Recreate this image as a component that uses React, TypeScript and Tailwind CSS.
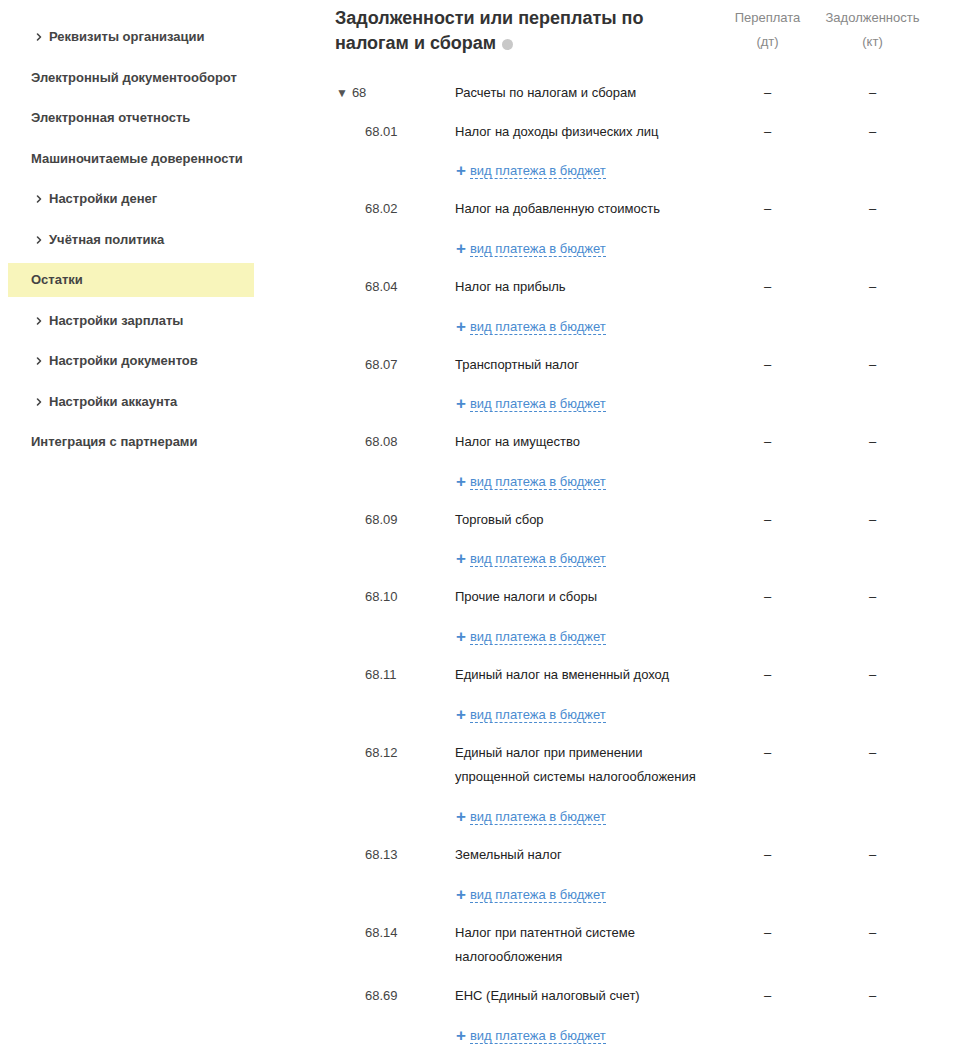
import { ChevronRight } from 'lucide-react';

type NavItem = { title: string; expandable?: boolean; active?: boolean };

const navItems: NavItem[] = [
    { title: 'Реквизиты организации', expandable: true },
    { title: 'Электронный документооборот' },
    { title: 'Электронная отчетность' },
    { title: 'Машиночитаемые доверенности' },
    { title: 'Настройки денег', expandable: true },
    { title: 'Учётная политика', expandable: true },
    { title: 'Остатки', active: true },
    { title: 'Настройки зарплаты', expandable: true },
    { title: 'Настройки документов', expandable: true },
    { title: 'Настройки аккаунта', expandable: true },
    { title: 'Интеграция с партнерами' },
];

type Account = { code: string; name: string; link?: boolean };

const accounts: Account[] = [
    { code: '68.01', name: 'Налог на доходы физических лиц', link: true },
    { code: '68.02', name: 'Налог на добавленную стоимость', link: true },
    { code: '68.04', name: 'Налог на прибыль', link: true },
    { code: '68.07', name: 'Транспортный налог', link: true },
    { code: '68.08', name: 'Налог на имущество', link: true },
    { code: '68.09', name: 'Торговый сбор', link: true },
    { code: '68.10', name: 'Прочие налоги и сборы', link: true },
    { code: '68.11', name: 'Единый налог на вмененный доход', link: true },
    { code: '68.12', name: 'Единый налог при применении упрощенной системы налогообложения', link: true },
    { code: '68.13', name: 'Земельный налог', link: true },
    { code: '68.14', name: 'Налог при патентной системе налогообложения' },
    { code: '68.69', name: 'ЕНС (Единый налоговый счет)', link: true },
];

const rowClass = 'grid grid-cols-[120px_260px_105px_105px] py-[7px] leading-[24.8px]';

function Sidebar() {
    return (
        <nav className="w-[246px] ml-2 pt-5 flex flex-col gap-[6.5px] shrink-0">
            {navItems.map((item) => (
                <div
                    key={item.title}
                    className={`h-[34px] flex items-center font-bold text-[13px] text-[#444] ${item.active ? 'bg-[#f8f5bb]' : ''} ${item.expandable ? 'pl-[25px]' : 'pl-[23px]'}`}
                >
                    {item.expandable && <ChevronRight className="w-[12px] h-[12px] mr-[4px] text-[#444]" strokeWidth={3.2} />}
                    {item.title}
                </div>
            ))}
        </nav>
    );
}

function Dash() {
    return <div className="text-center text-[#222]">–</div>;
}

function App() {
    return (
        <div className="flex bg-white min-h-[1061px] font-['Liberation_Sans',Arial,sans-serif]">
            <Sidebar />
            <main className="ml-[81px] pt-[6px] text-[13px]">
                <div className="grid grid-cols-[380px_105px_105px] mb-[18px]">
                    <h2 className="text-[18px] font-bold leading-[25px] text-[#333]">
                        Задолженности или переплаты по налогам и сборам{' '}
                        <span className="inline-block w-[11px] h-[11px] rounded-full bg-[#c8c8c8] align-[-1px] ml-[1px]"></span>
                    </h2>
                    <div className="text-center text-[#888] leading-6">Переплата<br />(дт)</div>
                    <div className="text-center text-[#888] leading-6">Задолженность<br />(кт)</div>
                </div>

                <div className={rowClass}>
                    <div className="flex items-center text-[#444]">
                        <span className="text-[12px] text-[#555] ml-[1px] mr-[4px]">▼</span>68
                    </div>
                    <div className="text-[#222]">Расчеты по налогам и сборам</div>
                    <Dash />
                    <Dash />
                </div>

                {accounts.map((a) => (
                    <div key={a.code}>
                        <div className={rowClass}>
                            <div className="pl-[30px] text-[#444]">{a.code}</div>
                            <div className="text-[#222]">{a.name}</div>
                            <Dash />
                            <Dash />
                        </div>
                        {a.link && (
                            <div className={rowClass}>
                                <div></div>
                                <div className="col-span-3 h-[24.8px] flex items-center text-[#4a8bd0]">
                                    <span className="text-[17px] font-bold leading-none ml-[1px] mr-[4px]">+</span>
                                    <span className="border-b border-dashed border-[#4a8bd0] leading-[15px] mt-[1px]">вид платежа в бюджет</span>
                                </div>
                            </div>
                        )}
                    </div>
                ))}
            </main>
        </div>
    );
}

export default App;
